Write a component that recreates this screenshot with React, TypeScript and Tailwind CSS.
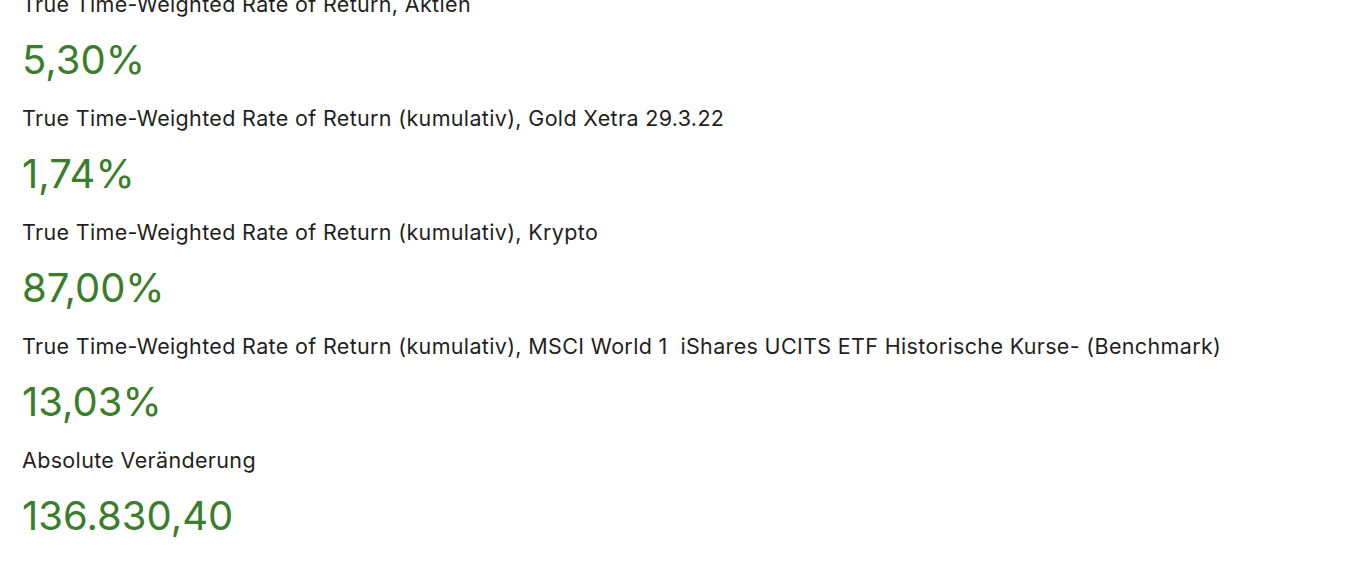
const metrics = [
  { label: 'True Time-Weighted Rate of Return, Aktien', value: '5,30%' },
  { label: 'True Time-Weighted Rate of Return (kumulativ), Gold Xetra 29.3.22', value: '1,74%' },
  { label: 'True Time-Weighted Rate of Return (kumulativ), Krypto', value: '87,00%' },
  {
    label: 'True Time-Weighted Rate of Return (kumulativ), MSCI World 1  iShares UCITS ETF Historische Kurse- (Benchmark)',
    value: '13,03%',
  },
  { label: 'Absolute Veränderung', value: '136.830,40' },
];

export default function App() {
  return (
    <div className="h-[564px] w-full overflow-hidden bg-white font-['Inter',sans-serif]">
      <div className="-mt-[10px] flex flex-col px-[22px]">
        {metrics.map((m) => (
          <div key={m.label} className="flex flex-col pb-[20px]">
            <p className="whitespace-pre text-[21.5px] leading-[28px] tracking-[0.34px] text-[#1f1f1f]">{m.label}</p>
            <p className="mt-[18px] text-[40px] leading-[48px] text-[#3a7d2a]">{m.value}</p>
          </div>
        ))}
      </div>
    </div>
  );
}
